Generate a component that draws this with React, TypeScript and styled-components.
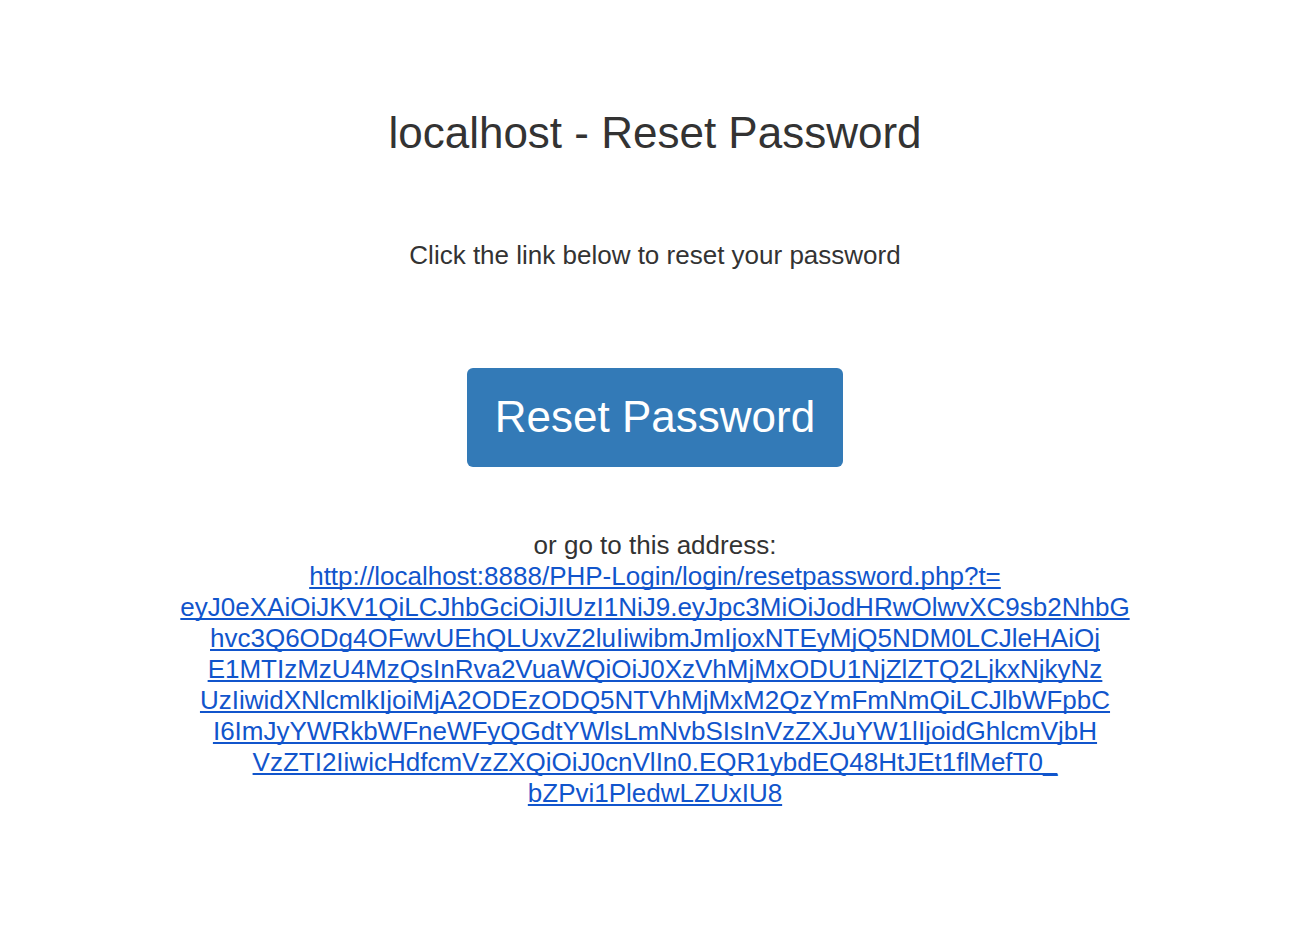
import React from 'react';
import styled, { createGlobalStyle } from 'styled-components';

const GlobalStyle = createGlobalStyle`
    html, body {
        margin: 0;
        padding: 0;
        background: #ffffff;
    }
    body {
        font-family: "Liberation Sans", Arial, Helvetica, sans-serif;
        color: #333333;
    }
`;

const Page = styled.div`
    display: flex;
    flex-direction: column;
    align-items: center;
    padding: 108px 2px 0 0;
    text-align: center;
`;

const Title = styled.h1`
    margin: 0;
    font-size: 44px;
    line-height: 50px;
    font-weight: normal;
    color: #333333;
`;

const Intro = styled.p`
    margin: 82px 0 0;
    font-size: 26px;
    line-height: 31px;
`;

const ResetButton = styled.a`
    display: inline-block;
    margin-top: 97px;
    padding: 24px 28px 25px;
    font-size: 44px;
    line-height: 50px;
    color: #ffffff;
    background-color: #337ab7;
    border-radius: 6px;
    text-decoration: none;
`;

const Address = styled.p`
    margin: 63px 0 0;
    font-size: 26px;
    line-height: 31px;
`;

const AddressLink = styled.a`
    color: #1155cc;
    text-decoration: underline;
    text-decoration-skip-ink: none;
`;

// the link breaks exactly where the reference wraps it
const linkLines = [
    'http://localhost:8888/PHP-Login/login/resetpassword.php?t=',
    'eyJ0eXAiOiJKV1QiLCJhbGciOiJIUzI1NiJ9.eyJpc3MiOiJodHRwOlwvXC9sb2NhbG',
    'hvc3Q6ODg4OFwvUEhQLUxvZ2luIiwibmJmIjoxNTEyMjQ5NDM0LCJleHAiOj',
    'E1MTIzMzU4MzQsInRva2VuaWQiOiJ0XzVhMjMxODU1NjZlZTQ2LjkxNjkyNz',
    'UzIiwidXNlcmlkIjoiMjA2ODEzODQ5NTVhMjMxM2QzYmFmNmQiLCJlbWFpbC',
    'I6ImJyYWRkbWFneWFyQGdtYWlsLmNvbSIsInVzZXJuYW1lIjoidGhlcmVjbH',
    'VzZTI2IiwicHdfcmVzZXQiOiJ0cnVlIn0.EQR1ybdEQ48HtJEt1flMefT0_',
    'bZPvi1PledwLZUxIU8',
];

const App: React.FC = () => {
    const href = linkLines.join('');
    return (
        <>
            <GlobalStyle />
            <Page>
                <Title>localhost - Reset Password</Title>
                <Intro>Click the link below to reset your password</Intro>
                <ResetButton href={href}>Reset Password</ResetButton>
                <Address>
                    or go to this address:
                    <br />
                    <AddressLink href={href}>
                        {linkLines.map((line, i) => (
                            <React.Fragment key={i}>
                                {line}
                                {i < linkLines.length - 1 && <br />}
                            </React.Fragment>
                        ))}
                    </AddressLink>
                </Address>
            </Page>
        </>
    );
};

export default App;
